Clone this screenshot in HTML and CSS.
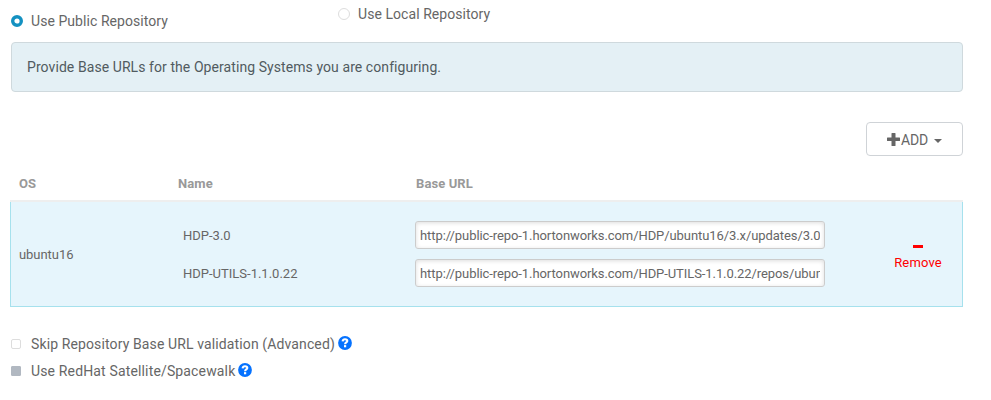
FILE: index.html
```html
<!DOCTYPE html>
<html lang="en">
<head>
<meta charset="utf-8">
<title>Select Repository</title>
<link rel="stylesheet" href="styles.css">
</head>
<body>
<main class="page">
  <div class="sources">
    <label class="source source-public"><svg class="radio-on" viewBox="0 0 12 12"><circle cx="6" cy="6" r="4.3"/></svg><span class="text-public">Use Public Repository</span></label>
    <label class="source source-local"><span class="radio"></span><span class="text-local">Use Local Repository</span></label>
  </div>
  <div class="alert"><span>Provide Base URLs for the Operating Systems you are configuring.</span></div>
  <div class="toolbar">
    <button class="add"><svg class="plus" viewBox="0 0 13 13"><path d="M5.5 0H8Q8.5 0 8.5 .5V4.5H12.5Q13 4.5 13 5V7.5Q13 8 12.5 8H8.5V12.5Q8.5 13 8 13H5Q4.5 13 4.5 12.5V8H.5Q0 8 0 7.5V5Q0 4.5 .5 4.5H4.5V.5Q4.5 0 5 0Z"/></svg><span class="add-text">ADD</span><span class="caret"></span></button>
  </div>
  <div class="table">
    <div class="row head"><span>OS</span><span>Name</span><span>Base URL</span></div>
    <div class="row body">
      <span class="os">ubuntu16</span>
      <div class="names"><span>HDP-3.0</span><span>HDP-UTILS-1.1.0.22</span></div>
      <div class="urls">
        <div class="field"><span>http://public-repo-1.hortonworks.com/HDP/ubuntu16/3.x/updates/3.0</span></div>
        <div class="field"><span>http://public-repo-1.hortonworks.com/HDP-UTILS-1.1.0.22/repos/ubun</span></div>
      </div>
      <div class="remove"><span class="minus"></span><span>Remove</span></div>
    </div>
  </div>
  <div class="options">
    <label class="option"><span class="check"></span><span class="option-text">Skip Repository Base URL validation (Advanced)</span><svg class="help" viewBox="0 0 14 14"><circle cx="7" cy="7" r="6.9" fill="#0572ff"/><path d="M4.6 5.3C4.8 3.8 5.8 3.2 7 3.2C8.4 3.2 9.3 3.9 9.3 5C9.3 6.6 7.1 6.4 7.1 8.2" fill="none" stroke="#fff" stroke-width="2.1"/><path d="M6 9.1h2.2v2.2H6z" fill="#fff"/></svg></label>
    <label class="option"><span class="check check-disabled"></span><span class="option-text option-wide">Use RedHat Satellite/Spacewalk</span><svg class="help" viewBox="0 0 14 14"><circle cx="7" cy="7" r="6.9" fill="#0572ff"/><path d="M4.6 5.3C4.8 3.8 5.8 3.2 7 3.2C8.4 3.2 9.3 3.9 9.3 5C9.3 6.6 7.1 6.4 7.1 8.2" fill="none" stroke="#fff" stroke-width="2.1"/><path d="M6 9.1h2.2v2.2H6z" fill="#fff"/></svg></label>
  </div>
</main>
</body>
</html>
```
FILE: styles.css
```css
* { box-sizing: border-box; }
body {
  margin: 0;
  background: #fff;
  color: #666;
  font: 14px/20px Roboto, sans-serif;
}
.page { width: 963px; padding-left: 10px; }
.sources { display: flex; height: 42px; padding-left: 1px; letter-spacing: .06px; }
.source { display: flex; align-items: center; height: 20px; }
.source-public { width: 327px; margin-top: 11px; gap: 8px; }
.source-local { margin-top: 4px; gap: 8px; }
.radio { width: 12px; height: 12px; border: 1px solid #ddd; border-radius: 50%; }
.radio-on { width: 12px; height: 12px; fill: #fff; stroke: #1491c1; stroke-width: 3.4px; }
.alert {
  height: 50px;
  margin-left: 1px;
  padding: 14px 15px;
  border: 1px solid #cfd9dd;
  border-radius: 4px;
  background: #e4f0f5;
  color: #515b60;
  letter-spacing: .075px;
}
.toolbar { display: flex; justify-content: flex-end; margin-top: 30px; }
.add {
  display: flex;
  align-items: center;
  width: 97px;
  height: 34px;
  padding: 0 0 0 20px;
  border: 1px solid #cfd3d7;
  border-radius: 4px;
  background: #fff;
  color: #666;
  font: 14px/20px Roboto, sans-serif;
}
.plus { width: 13px; height: 13px; margin-right: 1px; fill: #666; }
.add-text { padding-top: 2px; letter-spacing: -.1px; }
.caret { margin: 3px 0 0 6px; border: 4px solid transparent; border-top-color: #666; border-bottom: 0; }
.table { margin-top: 10px; font-size: 13px; }
.row { display: grid; grid-template-columns: 159px 238px 412px 1fr; padding-left: 9px; }
.head {
  height: 36px;
  padding-top: 8px;
  border-bottom: 2px solid #eee;
  color: #999;
  font-weight: 700;
  letter-spacing: .1px;
}
.body {
  height: 105px;
  padding-left: 8px;
  border: 1px solid #a6e1ed;
  border-top: 0;
  background: #e6f5fc;
}
.os { align-self: center; padding-top: 2px; letter-spacing: -.05px; }
.names { display: grid; grid-auto-rows: 28px; align-content: start; gap: 10px; padding: 20px 0 0 5px; line-height: 28px; }
.urls { padding-top: 19px; margin-left: -1px; width: 410px; }
.field {
  height: 28px;
  margin-bottom: 10px;
  padding: 1px 4px 0;
  border: 1px solid #ccc;
  border-radius: 3px;
  background: #fff;
  box-shadow: inset 0 1px 4px #ddd;
  line-height: 26px;
  letter-spacing: -.08px;
}
.field span { display: block; height: 25px; overflow: hidden; white-space: nowrap; }
.remove { display: flex; flex-direction: column; align-items: center; padding: 43px 0 0 46px; color: #f00; letter-spacing: .15px; }
.remove span:last-child { margin-top: 5px; }
.minus { width: 10px; height: 3px; background: #f00; }
.options { padding: 27px 0 0 1px; }
.option { display: flex; align-items: center; height: 20px; margin-bottom: 7px; letter-spacing: .12px; }
.option-wide { letter-spacing: .15px; }
.check { width: 10px; height: 10px; margin-right: 10px; border: 1px solid #ddd; border-radius: 2px; }
.check-disabled { border-color: #b1b8c1; border-radius: 1px; background: #b1b8c1; }
.help { width: 14px; height: 14px; margin: -2px 0 0 3px; }
```
